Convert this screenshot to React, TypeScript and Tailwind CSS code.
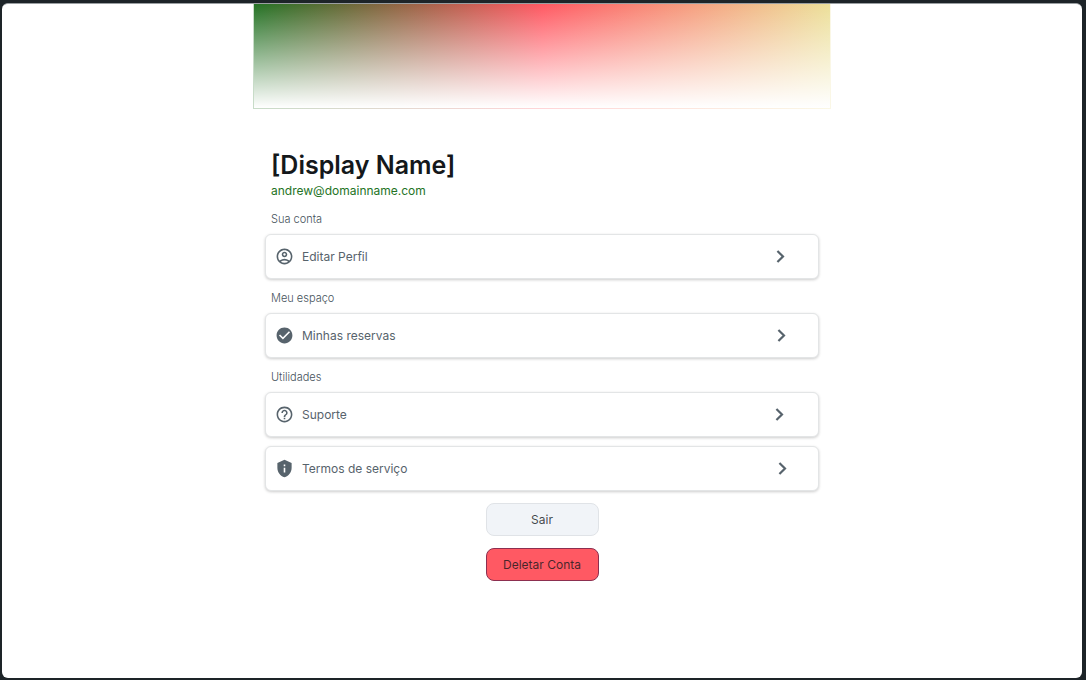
import type { ReactNode } from "react";
import {
  MdCheckCircle,
  MdHelpOutline,
  MdOutlineAccountCircle,
  MdPrivacyTip,
} from "react-icons/md";

function Chevron() {
  return (
    <svg
      viewBox="0 0 24 24"
      className="size-[23px]"
      fill="none"
      stroke="currentColor"
      strokeWidth="2.3"
      aria-hidden="true"
    >
      <path d="M8.8 6.2 14.6 12l-5.8 5.8" />
    </svg>
  );
}

function SectionTitle({ children }: { children: ReactNode }) {
  return (
    <h2 className="px-[18px] text-[11px] leading-4 font-light text-[#46525b]">{children}</h2>
  );
}

function MenuRow({ icon, label }: { icon: ReactNode; label: string }) {
  return (
    <a
      href="#"
      className="mx-3 flex h-[45px] items-center rounded-md border border-[#e3e5e6] bg-white pr-1 pl-[9px] text-[#57636c] shadow-[0_1px_3px_rgba(0,0,0,0.2)]"
    >
      <span className="text-[19px]">{icon}</span>
      <span className="ml-2 text-[12px] leading-5">{label}</span>
      <span className="flex-1">
        <span className="flex w-[95%] justify-end">
          <Chevron />
        </span>
      </span>
    </a>
  );
}

export default function App() {
  return (
    <div className="flex h-screen bg-[#1d2428] pt-[3px] pr-1 pb-0.5 pl-0.5 font-['Inter',sans-serif]">
      <main className="flex-1 overflow-hidden rounded-md border-t border-[#9a9fa2] bg-white">
        <div className="mx-auto w-full max-w-[578px]">
          <div className="h-[105px] bg-[linear-gradient(to_right,#247325_0%,#ff5963_50%,#ece09a_100%)]">
            <div className="h-full border border-t-0 border-white/75 bg-linear-to-b from-white/0 to-white bg-clip-padding" />
          </div>
          <h1 className="mt-[38px] px-[18px] text-[25px] leading-9 font-semibold text-[#14181b]">
            [Display Name]
          </h1>
          <p className="px-[18px] text-[12px] leading-4 text-[#247325]">andrew@domainname.com</p>

          <section className="mt-3 flex flex-col gap-[7px]">
            <SectionTitle>Sua conta</SectionTitle>
            <MenuRow icon={<MdOutlineAccountCircle />} label="Editar Perfil" />
          </section>
          <section className="mt-[11px] flex flex-col gap-[7px]">
            <SectionTitle>Meu espaço</SectionTitle>
            <MenuRow icon={<MdCheckCircle />} label="Minhas reservas" />
          </section>
          <section className="mt-[11px] flex flex-col gap-[7px]">
            <SectionTitle>Utilidades</SectionTitle>
            <MenuRow icon={<MdHelpOutline />} label="Suporte" />
            <div className="mt-0.5">
              <MenuRow icon={<MdPrivacyTip />} label="Termos de serviço" />
            </div>
          </section>

          <div className="mt-3 flex flex-col items-center gap-3">
            <button
              type="button"
              className="h-[33px] w-[113px] rounded-lg border border-[#e0e3e7] bg-[#f1f4f8] text-[12px] text-[#14181b]/80"
            >
              Sair
            </button>
            <button
              type="button"
              className="h-[33px] w-[113px] rounded-lg border border-[#8c2f50] bg-[#ff5963] text-[12px] text-[#14181b]/80"
            >
              Deletar Conta
            </button>
          </div>
        </div>
      </main>
    </div>
  );
}
